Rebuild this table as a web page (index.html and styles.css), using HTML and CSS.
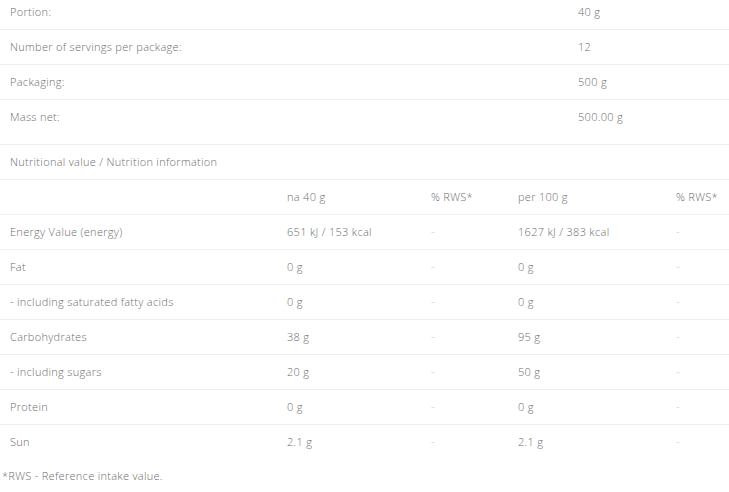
FILE: index.html
```html
<!DOCTYPE html>
<html lang="en">
<head>
<meta charset="utf-8">
<title>Product specification</title>
<link rel="stylesheet" href="styles.css">
</head>
<body>
<div class="page">
  <div class="specs">
    <div class="row first"><div class="cell">Portion:</div><div class="cell">40 g</div></div>
    <div class="row"><div class="cell">Number of servings per package:</div><div class="cell">12</div></div>
    <div class="row"><div class="cell">Packaging:</div><div class="cell">500 g</div></div>
    <div class="row tall"><div class="cell">Mass net:</div><div class="cell">500.00 g</div></div>
  </div>
  <div class="section-title">Nutritional value / Nutrition information</div>
  <div class="nutri">
    <div class="nrow"><div class="cell"></div><div class="cell">na 40 g</div><div class="cell">% RWS*</div><div class="cell">per 100 g</div><div class="cell">% RWS*</div></div>
    <div class="nrow"><div class="cell">Energy Value (energy)</div><div class="cell">651 kJ / 153 kcal</div><div class="cell dash">-</div><div class="cell">1627 kJ / 383 kcal</div><div class="cell dash">-</div></div>
    <div class="nrow"><div class="cell">Fat</div><div class="cell">0 g</div><div class="cell dash">-</div><div class="cell">0 g</div><div class="cell dash">-</div></div>
    <div class="nrow"><div class="cell">- including saturated fatty acids</div><div class="cell">0 g</div><div class="cell dash">-</div><div class="cell">0 g</div><div class="cell dash">-</div></div>
    <div class="nrow"><div class="cell">Carbohydrates</div><div class="cell">38 g</div><div class="cell dash">-</div><div class="cell">95 g</div><div class="cell dash">-</div></div>
    <div class="nrow"><div class="cell">- including sugars</div><div class="cell">20 g</div><div class="cell dash">-</div><div class="cell">50 g</div><div class="cell dash">-</div></div>
    <div class="nrow"><div class="cell">Protein</div><div class="cell">0 g</div><div class="cell dash">-</div><div class="cell">0 g</div><div class="cell dash">-</div></div>
    <div class="nrow last"><div class="cell">Sun</div><div class="cell">2.1 g</div><div class="cell dash">-</div><div class="cell">2.1 g</div><div class="cell dash">-</div></div>
  </div>
  <div class="footnote">*RWS - Reference intake value.</div>
</div>
</body>
</html>
```
FILE: styles.css
```css
html, body {
  margin: 0;
  padding: 0;
  background: #ffffff;
}
.page {
  font-family: "Open Sans", "Liberation Sans", sans-serif;
  font-weight: 300;
  font-size: 11px;
  line-height: 15px;
  letter-spacing: 0.3px;
  color: #6e6e6e;
  width: 729px;
}
.row, .nrow, .section-title {
  border-bottom: 1px solid #efefef;
}
.row {
  display: grid;
  grid-template-columns: 568px 1fr;
}
.nrow {
  display: grid;
  grid-template-columns: 277px 144px 87px 158px 1fr;
}
.cell {
  padding: 9px 0 10px 10px;
  white-space: nowrap;
}
.row.first .cell {
  padding-top: 4px;
}
.row.tall .cell {
  padding-bottom: 20px;
}
.section-title {
  padding: 9px 0 10px 10px;
}
.nrow.last {
  border-bottom: none;
}
.dash {
  color: #c4c4c4;
}
.footnote {
  padding: 9px 0 0 2px;
}
```
